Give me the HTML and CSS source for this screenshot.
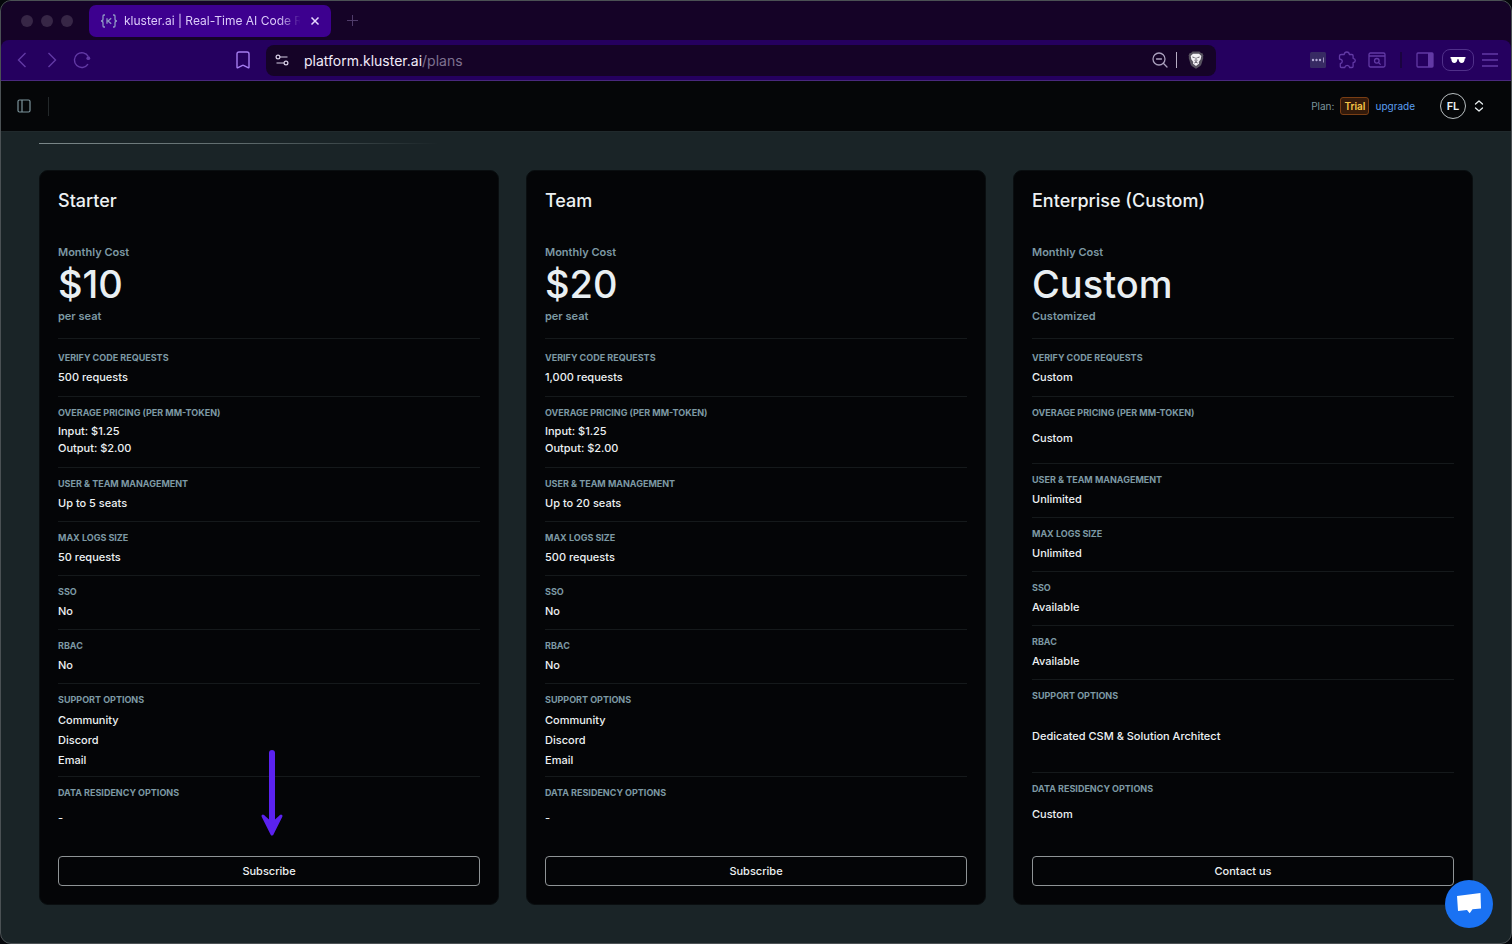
FILE: index.html
```html
<!DOCTYPE html>
<html lang="en">
<head>
<meta charset="utf-8">
<title>kluster.ai | Real-Time AI Code Reviews</title>
<link rel="stylesheet" href="styles.css">
</head>
<body>
<div class="window">
  <div class="chrome">
    <div class="tabs">
      <div class="lights"><span class="light"></span><span class="light"></span><span class="light"></span></div>
      <div class="tab">
        <svg width="18" height="14" viewBox="0 0 18 14" fill="none" stroke="#8f97c4" stroke-width="1.3"><path d="M5 1H4Q3 1 3 2.300V5Q3 7 1 7Q3 7 3 9v2.700Q3 13 4 13h1M13 1h1q1 0 1 1.300V5q0 2 2 2q-2 0-2 2v2.700Q15 13 14 13h-1M7 4.300v5.400M11.200 4.300L8 7l3.200 2.700"/></svg>
        <span class="tab-title">kluster.ai | Real-Time AI Code R</span>
        <button class="icon-btn" type="button" aria-label="Close tab"><svg width="10" height="10" viewBox="0 0 10 10" fill="none" stroke="#e6d8ff" stroke-width="1.5"><path d="M1.500 1.500l7 7M8.500 1.500l-7 7"/></svg></button>
      </div>
      <button class="icon-btn" type="button" aria-label="New tab"><svg width="11" height="11" viewBox="0 0 11 11" fill="none" stroke="#4f3b6a" stroke-width="1"><path d="M5.500 0v11M0 5.500h11"/></svg></button>
    </div>

    <div class="toolbar">
      <div class="nav">
        <button class="icon-btn" type="button" aria-label="Back"><svg width="10" height="16" viewBox="0 0 10 16" fill="none" stroke="#6239a5" stroke-width="1.400"><path d="M8.500 1L1.500 8l7 7"/></svg></button>
        <button class="icon-btn" type="button" aria-label="Forward"><svg width="10" height="16" viewBox="0 0 10 16" fill="none" stroke="#6239a5" stroke-width="1.400"><path d="M1.500 1l7 7-7 7"/></svg></button>
        <button class="icon-btn" type="button" aria-label="Reload"><svg width="18" height="18" viewBox="0 0 18 18" fill="none" stroke="#6239a5" stroke-width="1.400"><path d="M15.300 5.500A7.400 7.400 0 1 0 15 13.200"/><circle cx="15.300" cy="7.200" r="1.900" fill="#6239a5" stroke="none"/></svg></button>
      </div>
      <button class="icon-btn bookmark" type="button" aria-label="Bookmark"><svg width="14" height="18" viewBox="0 0 14 18" fill="none" stroke="#a57cf0" stroke-width="1.400" stroke-linejoin="round"><path d="M3 1h8q2 0 2 2v13.300q0 1-1 .4L7.500 14.300q-.5-.3-1 0L2 16.700q-1 .6-1-.4V3q0-2 2-2z"/></svg></button>
      <div class="address">
        <svg width="14" height="12" viewBox="0 0 14 12" fill="none" stroke="#d8cfe6" stroke-width="1.200"><circle cx="3" cy="3" r="1.900"/><path d="M5 3h7.500M1.500 9H9"/><circle cx="11" cy="9" r="1.900"/></svg>
        <span class="url">platform.kluster.ai<span class="path">/plans</span></span>
        <button class="icon-btn" type="button" aria-label="Zoom"><svg width="16" height="16" viewBox="0 0 16 16" fill="none" stroke="#aaa0bd" stroke-width="1.300" stroke-linecap="round"><circle cx="7" cy="7" r="6"/><path d="M4.500 7h5M11.300 11.300L15 15"/></svg></button>
        <span class="address-rule"></span>
        <button class="icon-btn shield" type="button" aria-label="Brave Shields"><svg width="18" height="18" viewBox="0 0 18 18"><path d="M5.500.5h7L14 2l1.500.2 1 2.600-.5 1 .3 1.200-2 6.500-1 1.500L9 17.700 4.700 15l-1-1.500-2-6.500L2 5.800l-.5-1 1-2.600L4 2z" fill="#57525f"/><path d="M6 2.700h6L14.300 5l-.6 3.300-2 2.700.4 1.400L9 15l-3.100-2.600.4-1.400-2-2.700L3.700 5z" fill="#f3f1f5"/><path d="M5.400 6l2.300.7M12.600 6l-2.300.7M9 6.500v3.200M7.500 9.300L9 10.600l1.500-1.300M7.300 12L9 11.200l1.700.8" fill="none" stroke="#57525f" stroke-width=".9"/></svg></button>
      </div>
      <div class="extensions">
        <button class="icon-btn" type="button" aria-label="Password manager"><svg width="16" height="16" viewBox="0 0 16 16"><rect width="16" height="16" rx="1.500" fill="#372a63"/><g fill="#b3a8d4"><circle cx="3" cy="8" r="1.200"/><circle cx="6.500" cy="8" r="1.200"/><circle cx="10" cy="8" r="1.200"/><path d="M13 5.500h.8v5H13z"/></g></svg></button>
        <button class="icon-btn" type="button" aria-label="Extensions"><svg width="18" height="18" viewBox="0 0 18 18" fill="none" stroke="#6239a5" stroke-width="1.300" stroke-linejoin="round" stroke-linecap="round"><path d="M3.500 3.500h2.700Q6.500 1 8.800 1t2.600 2.500h2.500q1.200 0 1.200 1.200v2.600q2.200.4 2.200 2.200t-2.200 2.200v3.600q0 1.200-1.200 1.200h-2.200q-.5-2.200-2.500-2.200t-2.500 2.200H3.500q-1.200 0-1.200-1.200v-2.700q2-.5 2-2.300T1.500 8V4.700q0-1.200 2-1.200z"/></svg></button>
        <button class="icon-btn" type="button" aria-label="Search tabs"><svg width="18" height="16" viewBox="0 0 18 16" fill="none" stroke="#6239a5" stroke-width="1.300"><rect x="1" y="1" width="16" height="14" rx="1.500"/><path d="M1 4h16M10.600 10.600l2 2"/><circle cx="8.800" cy="8.800" r="2.300"/></svg></button>
        <span class="ext-rule"></span>
        <button class="icon-btn" type="button" aria-label="Side panel"><svg width="18" height="16" viewBox="0 0 18 16"><rect x="1" y="1" width="16" height="14" rx="1" fill="none" stroke="#6239a5" stroke-width="1.300"/><path d="M12 1h5v14h-5z" fill="#6239a5"/></svg></button>
        <button class="icon-btn private" type="button" aria-label="Private window"><svg width="16" height="8" viewBox="0 0 16 8" fill="#fff"><path d="M.5 1h15v1.500h-.7Q14.500 7 11.700 7 9 7 8.600 3.200h-1.200Q7 7 4.300 7 1.500 7 1.200 2.500H.5z"/></svg></button>
        <button class="icon-btn" type="button" aria-label="Menu"><svg width="16" height="14" viewBox="0 0 16 14" stroke="#6239a5" stroke-width="1.300"><path d="M0 1h16M0 7h16M0 13h16"/></svg></button>
      </div>
    </div>
  </div>

  <header class="appbar">
    <button class="icon-btn" type="button" aria-label="Toggle sidebar"><svg width="14" height="14" viewBox="0 0 14 14" fill="none" stroke="#7c949c" stroke-width="1.200"><rect x="1" y="1" width="12" height="12" rx="1.500"/><path d="M5 1v12"/></svg></button>
    <span class="appbar-rule"></span>
    <div class="account">
      <span class="plan-label">Plan:</span>
      <span class="trial">Trial</span>
      <a class="upgrade" href="#">upgrade</a>
      <button class="user" type="button"><span class="avatar">FL</span><svg width="10" height="12" viewBox="0 0 10 12" fill="none" stroke="#e8eef0" stroke-width="1.300" stroke-linecap="round" stroke-linejoin="round"><path d="M1.500 4L5 1l3.500 3M1.500 8L5 11l3.500-3"/></svg></button>
    </div>
  </header>

  <main class="page">
    <div class="heading-rule"></div>
    <div class="plans">
      <section class="card">
        <h2 class="name">Starter</h2>
        <p class="muted">Monthly Cost</p>
        <p class="price">$10</p>
        <p class="muted">per seat</p>
        <dl class="features">
          <div class="row first"><dt>VERIFY CODE REQUESTS</dt><dd>500 requests</dd></div>
          <div class="row rates"><dt>OVERAGE PRICING (PER MM-TOKEN)</dt><dd>Input: $1.25<br>Output: $2.00</dd></div>
          <div class="row"><dt>USER &amp; TEAM MANAGEMENT</dt><dd>Up to 5 seats</dd></div>
          <div class="row"><dt>MAX LOGS SIZE</dt><dd>50 requests</dd></div>
          <div class="row"><dt>SSO</dt><dd>No</dd></div>
          <div class="row"><dt>RBAC</dt><dd>No</dd></div>
          <div class="row support"><dt>SUPPORT OPTIONS</dt><dd>Community<br>Discord<br>Email</dd></div>
          <div class="row tall"><dt>DATA RESIDENCY OPTIONS</dt><dd>-</dd></div>
        </dl>
        <button class="action" type="button">Subscribe</button>
        <svg class="arrow" width="24" height="88" viewBox="0 0 24 88"><path d="M12 4v74" stroke="#5b22f0" stroke-width="6" stroke-linecap="round"/><path d="M3 67l9 18 9-18-9 8z" fill="#5b22f0" stroke="#5b22f0" stroke-width="3" stroke-linejoin="round"/></svg>
      </section>
      <section class="card">
        <h2 class="name">Team</h2>
        <p class="muted">Monthly Cost</p>
        <p class="price">$20</p>
        <p class="muted">per seat</p>
        <dl class="features">
          <div class="row first"><dt>VERIFY CODE REQUESTS</dt><dd>1,000 requests</dd></div>
          <div class="row rates"><dt>OVERAGE PRICING (PER MM-TOKEN)</dt><dd>Input: $1.25<br>Output: $2.00</dd></div>
          <div class="row"><dt>USER &amp; TEAM MANAGEMENT</dt><dd>Up to 20 seats</dd></div>
          <div class="row"><dt>MAX LOGS SIZE</dt><dd>500 requests</dd></div>
          <div class="row"><dt>SSO</dt><dd>No</dd></div>
          <div class="row"><dt>RBAC</dt><dd>No</dd></div>
          <div class="row support"><dt>SUPPORT OPTIONS</dt><dd>Community<br>Discord<br>Email</dd></div>
          <div class="row tall"><dt>DATA RESIDENCY OPTIONS</dt><dd>-</dd></div>
        </dl>
        <button class="action" type="button">Subscribe</button>
      </section>
      <section class="card">
        <h2 class="name">Enterprise (Custom)</h2>
        <p class="muted">Monthly Cost</p>
        <p class="price">Custom</p>
        <p class="muted">Customized</p>
        <dl class="features">
          <div class="row first"><dt>VERIFY CODE REQUESTS</dt><dd>Custom</dd></div>
          <div class="row tall"><dt>OVERAGE PRICING (PER MM-TOKEN)</dt><dd>Custom</dd></div>
          <div class="row"><dt>USER &amp; TEAM MANAGEMENT</dt><dd>Unlimited</dd></div>
          <div class="row"><dt>MAX LOGS SIZE</dt><dd>Unlimited</dd></div>
          <div class="row"><dt>SSO</dt><dd>Available</dd></div>
          <div class="row"><dt>RBAC</dt><dd>Available</dd></div>
          <div class="row support single"><dt>SUPPORT OPTIONS</dt><dd>Dedicated CSM &amp; Solution Architect</dd></div>
          <div class="row tall"><dt>DATA RESIDENCY OPTIONS</dt><dd>Custom</dd></div>
        </dl>
        <button class="action" type="button">Contact us</button>
      </section>
    </div>
  </main>
  <button class="chat" type="button" aria-label="Open chat"><svg width="26" height="24" viewBox="0 0 26 24"><path d="M1 4l23.500-3 .5 15.500-8.500.8-2.800 4L11 18l-9 1z" fill="#fff"/></svg></button>
</div>
</body>
</html>
```
FILE: styles.css
```css
* { box-sizing: border-box; }

html { background: #05070b; }

body {
  margin: 0;
  font-family: "Inter", "Liberation Sans", sans-serif;
  color: #edf1f3;
}

h2, p, dl, dd { margin: 0; }

button {
  font: inherit;
  color: inherit;
  background: none;
  border: 0;
  padding: 0;
}

svg { display: block; flex: none; }

.window {
  position: relative;
  min-height: 100vh;
  display: flex;
  flex-direction: column;
  border: 1px solid #4b5154;
  border-radius: 11px;
  overflow: hidden;
  background: #1a2427;
}

.icon-btn { display: flex; align-items: center; justify-content: center; flex: none; }

.chrome { background: #150327; }

.tabs {
  display: flex;
  align-items: center;
  gap: 16px;
  height: 39px;
  padding: 0 20px;
}

.lights { display: flex; gap: 8px; }
.light { width: 12px; height: 12px; border-radius: 50%; background: #372646; }

.tab {
  display: flex;
  align-items: center;
  gap: 6px;
  width: 242px;
  height: 32px;
  padding: 0 11px;
  border-radius: 7px;
  background: #3d008f;
}

.tab-title {
  flex: 1;
  white-space: nowrap;
  font-size: 12px;
  color: #dccbfa;
  -webkit-mask-image: linear-gradient(to right, #000 86%, transparent 98%);
  mask-image: linear-gradient(to right, #000 86%, transparent 98%);
}

.toolbar {
  display: flex;
  align-items: center;
  height: 41px;
  padding: 0 13px 0 16px;
  background: #25005f;
  border-bottom: 1px solid #49287d;
  border-radius: 8px 8px 0 0;
}

.nav { display: flex; gap: 20px; }
.nav .icon-btn:last-child { margin-left: -4px; }
.bookmark { margin-left: 145px; }

.address {
  display: flex;
  align-items: center;
  flex: 1;
  gap: 8px;
  height: 31px;
  margin: 0 94px 0 16px;
  padding: 0 11px 0 9px;
  border-radius: 8px;
  background: #150327;
}

.url { flex: 1; padding-left: 7px; font-size: 14px; color: #f1ebf9; }
.path { color: #7e7190; }
.address-rule { width: 1px; height: 16px; background: #b7adc5; }
.shield { margin-left: 2px; }

.extensions { display: flex; align-items: center; gap: 12px; }
.ext-rule { width: 2px; height: 16px; margin: 0 2px; background: #1a0340; }
.private { width: 32px; height: 22px; margin: 0 -4px; border: 1px solid #50308a; border-radius: 8px; }

.appbar {
  display: flex;
  align-items: center;
  gap: 17px;
  height: 51px;
  padding: 0 27px 0 16px;
  background: #050608;
  border-bottom: 1px solid #20292c;
}

.appbar-rule { width: 1px; height: 19px; background: #23282a; }

.account { display: flex; align-items: center; gap: 6px; margin-left: auto; font-size: 10px; }
.plan-label { color: #7c949c; }
.trial {
  padding: 0 3px;
  line-height: 16px;
  font-weight: 600;
  color: #f5c648;
  background: #331a0b;
  border: 1px solid #7a3e14;
  border-radius: 3px;
}
.upgrade { color: #5c9ff0; text-decoration: none; }
.user { display: flex; align-items: center; gap: 8px; margin-left: 19px; }
.avatar {
  width: 26px;
  line-height: 24px;
  border: 1px solid #b9bfc1;
  border-radius: 50%;
  font-size: 11px;
  font-weight: 600;
  text-align: center;
}

.page { flex: 1; padding: 11px 38px 38px; }

.heading-rule {
  width: 400px;
  height: 1px;
  margin-bottom: 26px;
  background: linear-gradient(to right, #7b8789, #5f6b6d 50%, transparent);
}

.plans { display: grid; grid-template-columns: repeat(3, 1fr); gap: 27px; }

.card {
  position: relative;
  display: flex;
  flex-direction: column;
  padding: 18px;
  border: 1px solid #0a0e10;
  border-radius: 9px;
  background: #040507;
}

.name { margin-bottom: 31px; font-size: 18px; line-height: 24px; font-weight: 500; }
.muted { font-size: 11px; line-height: 16px; font-weight: 600; color: #7d99a4; }
.price { font-size: 38px; line-height: 48px; font-weight: 500; color: #e9eff2; }

.features { margin: 14px 0 23px; }
.row { padding: 9px 0; border-top: 1px solid #15191b; }

dt { margin-bottom: 3px; font-size: 9px; line-height: 14px; font-weight: 700; color: #7d99a4; }
dd { font-size: 11px; line-height: 18px; font-weight: 500; }

.first { padding: 12px 0 10px; }
.rates { padding-bottom: 10px; }
.rates dd { line-height: 17px; }
.tall { padding-bottom: 10px; }
.tall dd { line-height: 30px; }
.support { padding-bottom: 6px; }
.support dd { line-height: 20px; }
.single dd { line-height: 60px; }
.row:last-child { padding-bottom: 0; }

.action {
  height: 30px;
  margin-top: auto;
  border: 1px solid #8f9496;
  border-radius: 4px;
  font-size: 11px;
  font-weight: 500;
}

.arrow { position: absolute; left: 48%; bottom: 67px; }

.chat {
  position: absolute;
  right: 18px;
  bottom: 15px;
  display: flex;
  align-items: center;
  justify-content: center;
  width: 48px;
  height: 48px;
  border-radius: 50%;
  background: #1a72f3;
}
```
